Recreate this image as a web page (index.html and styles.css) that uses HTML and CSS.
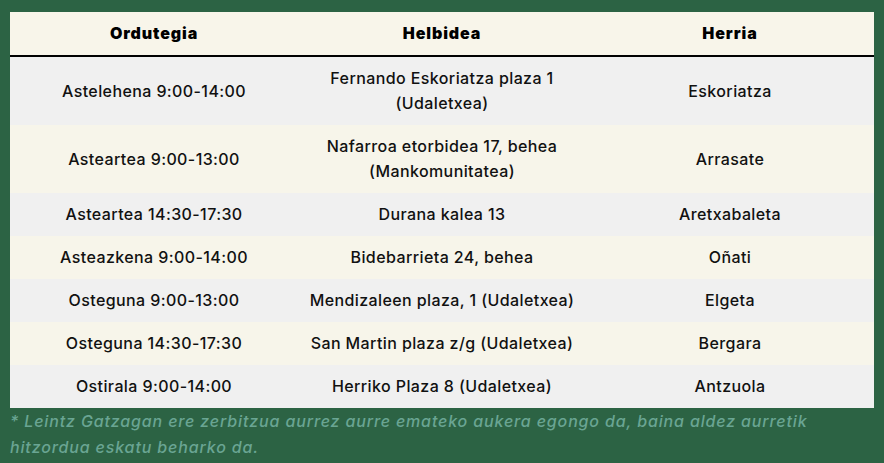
FILE: index.html
```html
<!DOCTYPE html>
<html lang="eu">
<head>
<meta charset="utf-8">
<link rel="stylesheet" href="styles.css">
</head>
<body>
<div class="page">
  <table class="schedule">
    <thead>
      <tr><th>Ordutegia</th><th>Helbidea</th><th>Herria</th></tr>
    </thead>
    <tbody>
      <tr class="odd"><td>Astelehena 9:00-14:00</td><td>Fernando Eskoriatza plaza 1<br>(Udaletxea)</td><td>Eskoriatza</td></tr>
      <tr class="even"><td>Asteartea 9:00-13:00</td><td>Nafarroa etorbidea 17, behea<br>(Mankomunitatea)</td><td>Arrasate</td></tr>
      <tr class="odd"><td>Asteartea 14:30-17:30</td><td>Durana kalea 13</td><td>Aretxabaleta</td></tr>
      <tr class="even"><td>Asteazkena 9:00-14:00</td><td>Bidebarrieta 24, behea</td><td>Oñati</td></tr>
      <tr class="odd"><td>Osteguna 9:00-13:00</td><td>Mendizaleen plaza, 1 (Udaletxea)</td><td>Elgeta</td></tr>
      <tr class="even"><td>Osteguna 14:30-17:30</td><td>San Martin plaza z/g (Udaletxea)</td><td>Bergara</td></tr>
      <tr class="odd"><td>Ostirala 9:00-14:00</td><td>Herriko Plaza 8 (Udaletxea)</td><td>Antzuola</td></tr>
    </tbody>
  </table>
  <p class="note">* Leintz Gatzagan ere zerbitzua aurrez aurre emateko aukera egongo da, baina aldez aurretik hitzordua eskatu beharko da.</p>
</div>
</body>
</html>
```
FILE: styles.css
```css
html, body {
  margin: 0;
  padding: 0;
  background: #2c6344;
}
.page {
  padding: 12px 10px 0 10px;
  font-family: Inter, "Open Sans", sans-serif;
}
.schedule {
  width: 864px;
  border-collapse: collapse;
  table-layout: fixed;
}
.schedule th {
  background: #f8f5ea;
  color: #000;
  font-weight: 900;
  font-size: 16px;
  letter-spacing: 0.9px;
  line-height: 25px;
  padding: 9px 8px;
  border-bottom: 2px solid #000;
  text-align: center;
}
.schedule td {
  color: #111;
  font-weight: 500;
  font-size: 16px;
  letter-spacing: 0.4px;
  line-height: 25px;
  padding: 9px 8px;
  text-align: center;
}
.schedule .odd td { background: #f0f0f0; }
.schedule .even td { background: #f7f5ea; }
.note {
  margin: 0;
  width: 864px;
  color: #6aa593;
  font-style: italic;
  font-weight: 500;
  font-size: 16px;
  letter-spacing: 0.85px;
  line-height: 26px;
}
```
